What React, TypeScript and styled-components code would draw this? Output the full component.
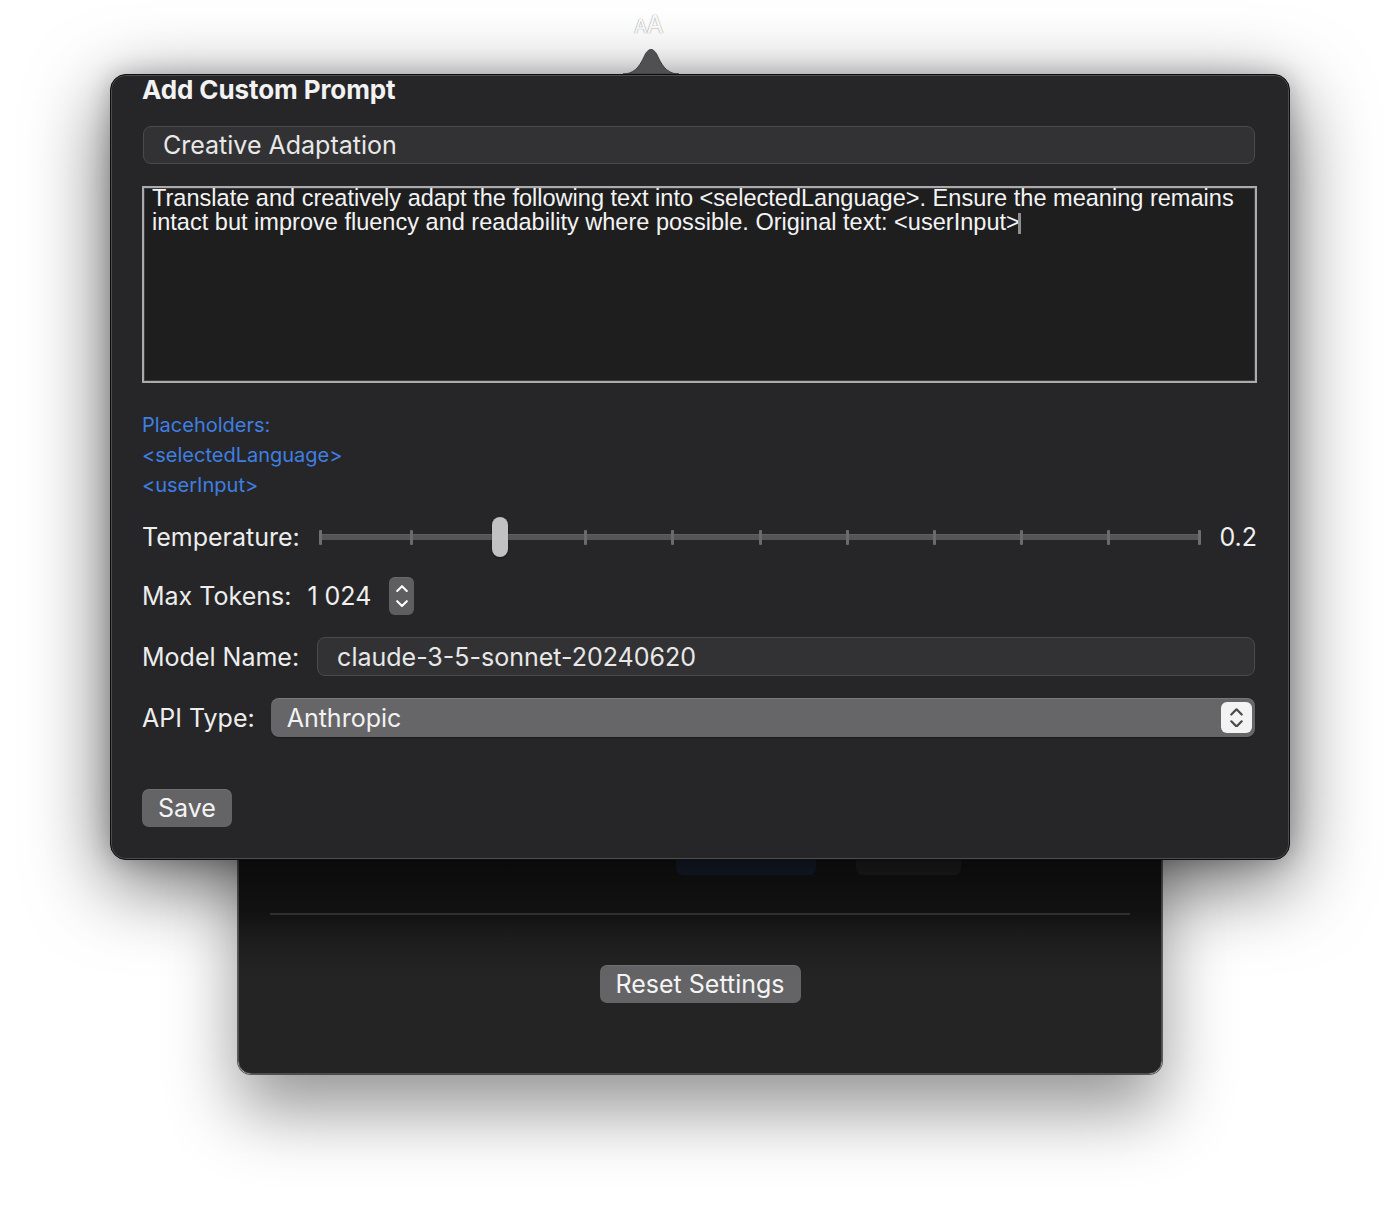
import React from "react";
import styled, { createGlobalStyle } from "styled-components";

const Global = createGlobalStyle`
  html, body { margin: 0; padding: 0; background: #ffffff; }
  body { font-family: Inter, "Liberation Sans", sans-serif; -webkit-font-smoothing: antialiased; }
  * { box-sizing: border-box; }
`;

const Desktop = styled.div`
  position: relative;
  width: 1400px;
  height: 1219px;
  overflow: hidden;
  background: #ffffff;
`;

const GhostIcon = styled.div`
  position: absolute;
  left: 634px;
  top: 13px;
  display: flex;
  align-items: baseline;
  font-family: Inter, sans-serif;
  font-weight: 500;
  color: #fbfbfb;
  text-shadow: 0 0 1px #9a9a9a, 0 0 1px #b0b0b0;
  letter-spacing: -1px;
`;

const GhostLetter = styled.span<{ $size: number }>`
  font-size: ${(p) => p.$size}px;
  line-height: 1;
`;

/* ---------- back window ---------- */
const BackWindow = styled.div`
  position: absolute;
  left: 238px;
  top: 640px;
  width: 924px;
  height: 434px;
  background: linear-gradient(
    to bottom,
    #161617 0,
    #151516 272px,
    #1d1d1e 295px,
    #242425 330px,
    #242425 100%
  );
  border: 1px solid #4d4d4f;
  border-radius: 13px;
  box-shadow: 0 0 0 1px rgba(0, 0, 0, 0.55), 0 36px 70px rgba(0, 0, 0, 0.42);
  display: flex;
  flex-direction: column;
  justify-content: flex-end;
  padding: 0 31px 70px;
`;

const HiddenRow = styled.div`
  display: flex;
  gap: 40px;
  margin-left: 406px;
`;

const HiddenButton = styled.div<{ $primary?: boolean }>`
  width: ${(p) => (p.$primary ? 140 : 105)}px;
  height: 38px;
  border-radius: 7px;
  background: ${(p) => (p.$primary ? "#1a2131" : "#222223")};
`;

const Separator = styled.div`
  height: 2px;
  background: #363637;
  margin-top: 38px;
`;

const BackFooter = styled.div`
  display: flex;
  justify-content: center;
  margin-top: 50px;
`;

const GrayButton = styled.button`
  height: 38px;
  padding: 0 16px;
  border: none;
  border-radius: 7px;
  background: #646466;
  color: #f4f4f4;
  font-family: Inter, sans-serif;
  font-size: 25px;
  line-height: 38px;
  box-shadow: inset 0 1px 0 rgba(255, 255, 255, 0.08);
`;

/* ---------- popover ---------- */
const Popover = styled.div`
  position: absolute;
  left: 110px;
  top: 74px;
  width: 1180px;
  height: 786px;
  background: #262628;
  border: 1px solid #0e0e0f;
  border-radius: 16px;
  box-shadow: inset 0 0 0 1px #4d4d50, 0 22px 80px rgba(0, 0, 0, 0.62),
    0 0 24px rgba(0, 0, 0, 0.22);
  padding: 0 32px 0 31px;
  display: flex;
  flex-direction: column;
`;

const Arrow = styled.svg`
  position: absolute;
  left: 512px;
  top: -32px;
`;

const Title = styled.h1`
  margin: 0;
  font-family: Inter, sans-serif;
  font-weight: 700;
  font-size: 26px;
  line-height: 30px;
  color: #f2f2f2;
  letter-spacing: -0.1px;
`;

const TextField = styled.div<{ $top: number }>`
  margin-top: ${(p) => p.$top}px;
  height: 38px;
  display: flex;
  align-items: center;
  border: 1px solid #4a4a4d;
  border-radius: 8px;
  background: #323234;
  color: #e8e8e8;
  font-family: Inter, sans-serif;
  font-size: 25px;
`;

const NameField = styled(TextField)`
  margin-left: 1px;
  margin-right: 2px;
  padding-left: 19px;
`;

const PromptBox = styled.div`
  margin-top: 22px;
  height: 197px;
  border: 2px solid #ababad;
  box-shadow: inset 0 0 0 1px #3d3d3f;
  background: #1e1e1f;
  overflow: hidden;
  padding: 0 8px;
`;

const PromptText = styled.p`
  margin: -2px 0 0;
  font-family: "Liberation Sans", Arial, sans-serif;
  font-size: 23.55px;
  line-height: 24px;
  color: #f3f3f3;
`;

const Caret = styled.span`
  display: inline-block;
  width: 3px;
  height: 21px;
  margin-left: -2px;
  background: #8e8e90;
  vertical-align: -4px;
`;

const Placeholders = styled.div`
  margin-top: 27px;
  display: flex;
  flex-direction: column;
`;

const PlaceholderLine = styled.span`
  font-family: Inter, sans-serif;
  font-size: 20px;
  line-height: 30px;
  color: #3f7fe2;
`;

const Row = styled.div<{ $top: number; $h: number }>`
  margin-top: ${(p) => p.$top}px;
  height: ${(p) => p.$h}px;
  display: flex;
  align-items: center;
  gap: 18px;
`;

const Label = styled.span`
  font-family: Inter, sans-serif;
  font-size: 25px;
  color: #ededed;
  white-space: nowrap;
`;

const Value = styled(Label)`
  color: #f0f0f0;
`;

const TokenValue = styled(Value)`
  margin-left: -2px;
`;

const SliderTrack = styled.div`
  position: relative;
  flex: 1;
  height: 40px;
  margin-left: 1px;
  margin-right: 0;
`;

const TrackBar = styled.div`
  position: absolute;
  left: 0;
  right: 0;
  top: 17px;
  height: 6px;
  border-radius: 3px;
  background: #555557;
  box-shadow: inset 0 1px 0 #5f5f61;
`;

const Tick = styled.div<{ $end?: boolean }>`
  position: absolute;
  top: 13px;
  width: 3px;
  height: 15px;
  margin-left: -1.5px;
  border-radius: 1px;
  background: ${(p) => (p.$end ? "#6e6e70" : "#6a6a6c")};
`;

const Knob = styled.div`
  position: absolute;
  top: 0;
  width: 16px;
  height: 40px;
  margin-left: -8px;
  border-radius: 8px;
  background: #c1c1c3;
  box-shadow: 0 1px 2px rgba(0, 0, 0, 0.4);
`;

const Stepper = styled.div`
  width: 25px;
  height: 38px;
  border-radius: 6px;
  background: #5e5e60;
  display: flex;
  flex-direction: column;
  align-items: center;
  justify-content: center;
  gap: 7px;
  box-shadow: inset 0 1px 0 rgba(255, 255, 255, 0.08);
`;

const ModelField = styled(TextField)`
  flex: 1;
  height: 39px;
  margin-right: 2px;
  padding-left: 19px;
`;

const Select = styled.div`
  flex: 1;
  height: 39px;
  margin-left: -2px;
  margin-right: 2px;
  border-radius: 8px;
  background: #666668;
  box-shadow: inset 0 1px 0 rgba(255, 255, 255, 0.12), 0 1px 1px rgba(0, 0, 0, 0.3);
  display: flex;
  align-items: center;
  justify-content: space-between;
  padding: 0 3px 0 16px;
  color: #f2f2f2;
  font-family: Inter, sans-serif;
  font-size: 25px;
`;

const SelectIndicator = styled.div`
  width: 31px;
  height: 31px;
  border-radius: 6px;
  background: #f3f3f3;
  display: flex;
  flex-direction: column;
  align-items: center;
  justify-content: center;
  gap: 4px;
`;

const SaveRow = styled.div`
  margin-top: 52px;
  display: flex;
`;

const Chevron = ({ up, color, w = 10 }: { up?: boolean; color: string; w?: number }) => (
  <svg width={w} height={w * 0.6} viewBox="0 0 10 6" fill="none">
    <path
      d={up ? "M1 5 L5 1 L9 5" : "M1 1 L5 5 L9 1"}
      stroke={color}
      strokeWidth="1.7"
      strokeLinecap="round"
      strokeLinejoin="round"
    />
  </svg>
);

const TICKS = 11;
const KNOB_INSET = 5.5;

export default function App() {
  const temperature = 0.2;
  const tickPos = (i: number) =>
    i === 0
      ? "1.5px"
      : i === TICKS - 1
      ? "calc(100% - 1.5px)"
      : `calc(${KNOB_INSET}px + (100% - ${KNOB_INSET * 2}px) * ${i / (TICKS - 1)})`;

  return (
    <Desktop>
      <Global />
      <GhostIcon>
        <GhostLetter $size={19}>A</GhostLetter>
        <GhostLetter $size={24}>A</GhostLetter>
      </GhostIcon>

      <BackWindow>
        <HiddenRow>
          <HiddenButton $primary />
          <HiddenButton />
        </HiddenRow>
        <Separator />
        <BackFooter>
          <GrayButton>Reset Settings</GrayButton>
        </BackFooter>
      </BackWindow>

      <Popover>
        <Arrow width="56" height="31" viewBox="0 0 56 31">
          <path
            d="M0 31 C 10 31, 16 25, 21 14 C 25 4, 31 4, 35 14 C 40 25, 46 31, 56 31 Z"
            fill="#505052"
            stroke="#3a3a3c"
            strokeWidth="1"
          />
        </Arrow>

        <Title>Add Custom Prompt</Title>

        <NameField $top={21}>Creative Adaptation</NameField>

        <PromptBox>
          <PromptText>
            Translate and creatively adapt the following text into &lt;selectedLanguage&gt;. Ensure the
            meaning remains intact but improve fluency and readability where possible. Original text:
            &lt;userInput&gt;
            <Caret />
          </PromptText>
        </PromptBox>

        <Placeholders>
          <PlaceholderLine>Placeholders:</PlaceholderLine>
          <PlaceholderLine>&lt;selectedLanguage&gt;</PlaceholderLine>
          <PlaceholderLine>&lt;userInput&gt;</PlaceholderLine>
        </Placeholders>

        <Row $top={17} $h={40}>
          <Label>Temperature:</Label>
          <SliderTrack>
            <TrackBar />
            {Array.from({ length: TICKS }).map((_, i) => (
              <Tick key={i} $end={i === 0 || i === TICKS - 1} style={{ left: tickPos(i) }} />
            ))}
            <Knob
              style={{
                left: `calc(${KNOB_INSET}px + (100% - ${KNOB_INSET * 2}px) * ${temperature} + 1px)`,
              }}
            />
          </SliderTrack>
          <Value>0.2</Value>
        </Row>

        <Row $top={20} $h={38}>
          <Label>Max Tokens:</Label>
          <TokenValue>1 024</TokenValue>
          <Stepper>
            <Chevron up color="#ffffff" w={12} />
            <Chevron color="#ffffff" w={12} />
          </Stepper>
        </Row>

        <Row $top={22} $h={39}>
          <Label>Model Name:</Label>
          <ModelField $top={0}>claude-3-5-sonnet-20240620</ModelField>
        </Row>

        <Row $top={22} $h={39}>
          <Label>API Type:</Label>
          <Select>
            <span>Anthropic</span>
            <SelectIndicator>
              <Chevron up color="#4a4a4a" w={13} />
              <Chevron color="#4a4a4a" w={13} />
            </SelectIndicator>
          </Select>
        </Row>

        <SaveRow>
          <GrayButton>Save</GrayButton>
        </SaveRow>
      </Popover>
    </Desktop>
  );
}
